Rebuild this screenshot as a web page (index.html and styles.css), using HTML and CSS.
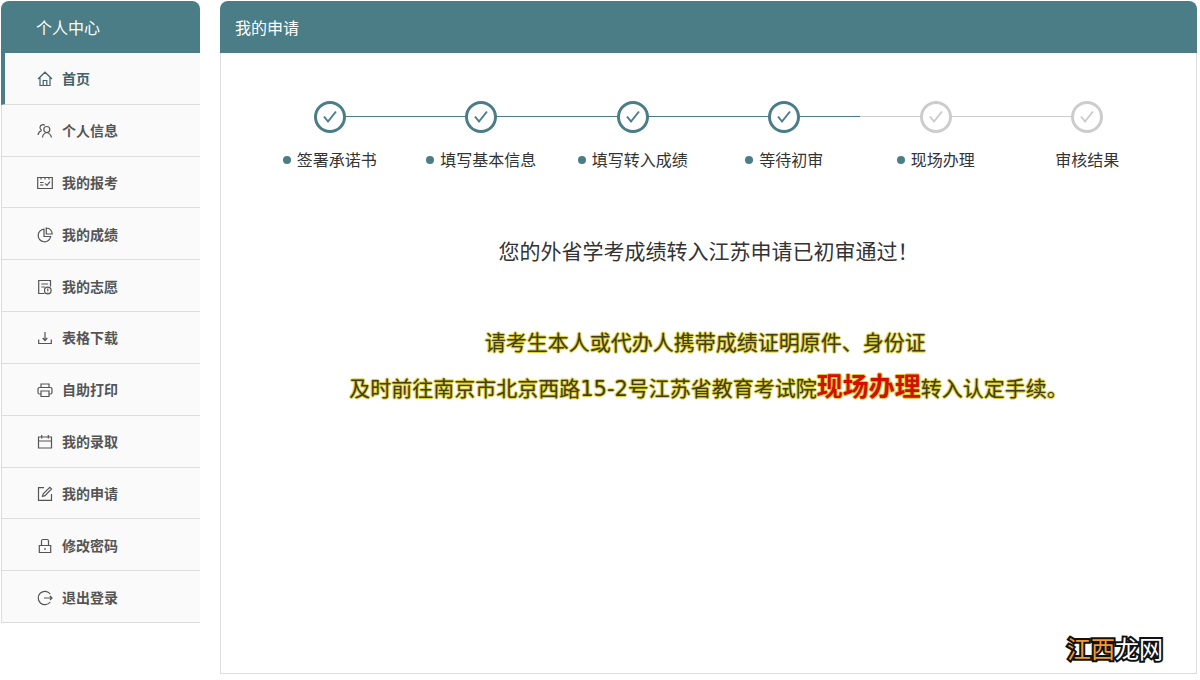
FILE: index.html
```html
<!DOCTYPE html>
<html lang="zh-CN">
<head>
<meta charset="utf-8">
<meta name="viewport" content="width=device-width, initial-scale=1">
<title>我的申请</title>
<link rel="stylesheet" href="styles.css">
</head>
<body>
<div class="layout">
  <aside class="sidebar">
    <h2 class="bar bar-side">个人中心</h2>
    <nav class="menu">
      <a class="menu-item active" href="#"><svg class="icon" viewBox="0 0 16 16"><path d="M1 8 8 1.200 15 8M3 6.500V14.500H13V6.500M6.200 14.500V9.500H9.800V14.500"/></svg>首页</a>
      <a class="menu-item" href="#"><svg class="icon" viewBox="0 0 16 16"><circle cx="9.800" cy="6.500" r="3"/><path d="M5.500 14.500C5.700 12 7 10.200 9.800 9.500 12.600 10.200 14 12 14.500 14.500M7.800 2.300C6.500 1.200 3.200 1.500 3 4.300 2.900 5.800 3.700 6.800 4.700 7.200M4.700 7.400C2.500 8.300 1.500 9.500 1 12"/></svg>个人信息</a>
      <a class="menu-item" href="#"><svg class="icon" viewBox="0 0 16 16"><path d="M.7 2.500H15.300V13.500H.7ZM4 2.500V4.500M8 2.500V4.500M12 2.500V4.500M3 7.500H6.500M3 10H6.500M8.300 8.500 10 10.300 13 6.700"/></svg>我的报考</a>
      <a class="menu-item" href="#"><svg class="icon" viewBox="0 0 16 16"><path d="M7 2.200A6.300 6.300 0 1 0 13.700 9.500H7ZM9.300 1V7H15.200C15 3.500 12.800 1.300 9.300 1Z"/></svg>我的成绩</a>
      <a class="menu-item" href="#"><svg class="icon" viewBox="0 0 16 16"><path d="M7.500 14.500H1.700V1.500H13.500V7.500M4.300 5H11M4.300 8H8"/><circle cx="10.800" cy="11.500" r="3.300"/><path d="M10.800 9.500V12M10.800 12.800V13.500"/></svg>我的志愿</a>
      <a class="menu-item" href="#"><svg class="icon" viewBox="0 0 16 16"><path d="M1.700 9.500V13.500H14.300V9.500M8 2V10.300M5.700 8 8 10.500 10.300 8"/></svg>表格下载</a>
      <a class="menu-item" href="#"><svg class="icon" viewBox="0 0 16 16"><path d="M4 5.500V2H12V5.500M4 12H2.500Q1 12 1 10.500V7Q1 5.500 2.500 5.500H13.500Q15 5.500 15 7V10.500Q15 12 13.500 12H12M4 9H12V14.500H4Z"/></svg>自助打印</a>
      <a class="menu-item" href="#"><svg class="icon" viewBox="0 0 16 16"><path d="M1.500 3H14.500V14H1.500ZM1.500 7H14.500M4.700 1V4.500M11.300 1V4.500"/></svg>我的录取</a>
      <a class="menu-item" href="#"><svg class="icon" viewBox="0 0 16 16"><path d="M7 1.700H1.500V14.300H14.500V8M5.500 10.300 6.200 7.700 12.800 1.300 14.500 3 8 9.600Z"/></svg>我的申请</a>
      <a class="menu-item" href="#"><svg class="icon" viewBox="0 0 16 16"><path d="M2.300 7.500H13.700V14.500H2.300ZM4.500 7.500V3Q4.500 1.500 6 1.500H10Q11.500 1.500 11.500 3V7.500M8 10V12"/></svg>修改密码</a>
      <a class="menu-item" href="#"><svg class="icon" viewBox="0 0 16 16"><path d="M13.300 4A6.700 6.700 0 1 0 13.300 12M7 8H15M13 6 15 8 13 10"/></svg>退出登录</a>
    </nav>
  </aside>
  <main class="panel">
    <h1 class="bar bar-main">我的申请</h1>
    <div class="content">
      <ol class="steps">
        <li class="step done"><span class="node"><svg class="tick" viewBox="0 0 16 16"><path d="M2 7.500 6 12.500 14 2.500"/></svg></span><span class="label dotted">签署承诺书</span></li>
        <li class="step done"><span class="node"><svg class="tick" viewBox="0 0 16 16"><path d="M2 7.500 6 12.500 14 2.500"/></svg></span><span class="label dotted">填写基本信息</span></li>
        <li class="step done"><span class="node"><svg class="tick" viewBox="0 0 16 16"><path d="M2 7.500 6 12.500 14 2.500"/></svg></span><span class="label dotted">填写转入成绩</span></li>
        <li class="step done"><span class="node"><svg class="tick" viewBox="0 0 16 16"><path d="M2 7.500 6 12.500 14 2.500"/></svg></span><span class="label dotted">等待初审</span></li>
        <li class="step"><span class="node"><svg class="tick" viewBox="0 0 16 16"><path d="M2 7.500 6 12.500 14 2.500"/></svg></span><span class="label dotted">现场办理</span></li>
        <li class="step"><span class="node"><svg class="tick" viewBox="0 0 16 16"><path d="M2 7.500 6 12.500 14 2.500"/></svg></span><span class="label">审核结果</span></li>
      </ol>
      <p class="result">您的外省学考成绩转入江苏申请已初审通过！</p>
      <div class="notice">
        <p>请考生本人或代办人携带成绩证明原件、身份证&nbsp;</p>
        <p>及时前往南京市北京西路15-2号江苏省教育考试院<strong>现场办理</strong>转入认定手续。</p>
      </div>
    </div>
    <div class="watermark"><span class="warm">江西</span>龙网</div>
  </main>
</div>
</body>
</html>
```
FILE: styles.css
```css
* { box-sizing: border-box; }
body {
  margin: 0;
  background: #fff;
  color: #333;
  font-family: "Open Sans", "Noto Sans CJK SC", sans-serif;
}
h1, h2, p, ol { margin: 0; padding: 0; }

.layout {
  display: flex;
  align-items: flex-start;
  gap: 20px;
  padding: 1px 3px 6px 1px;
}
.bar {
  height: 52px;
  border-radius: 8px 8px 0 0;
  background: #4a7d86;
  color: #fff;
  font-size: 16px;
  font-weight: 400;
  line-height: 54px;
}

.sidebar { flex: 0 0 199px; }
.bar-side { padding-left: 35px; }
.menu {
  display: flex;
  flex-direction: column;
  min-height: 570px;
  border-left: 1px solid #ddd;
  background: #fafafa;
}
.menu-item {
  flex: 1;
  display: flex;
  align-items: center;
  gap: 9px;
  padding-top: 2px;
  padding-left: 35px;
  border-bottom: 1px solid #ddd;
  color: #555;
  font-size: 14px;
  font-weight: 700;
  line-height: 20px;
  text-decoration: none;
}
.menu-item.active {
  margin-left: -1px;
  padding-left: 32px;
  border-left: 4px solid #4a7d86;
  color: #42616a;
}
.icon {
  width: 16px;
  height: 16px;
  fill: none;
  stroke: currentColor;
  stroke-width: 1.2;
}

.panel {
  position: relative;
  flex: 1;
  min-width: 0;
  min-height: calc(100vh - 7px);
  border-bottom: 1px solid #ddd;
}
.panel::before {
  content: "";
  position: absolute;
  inset: 52px 0 0;
  border: solid #ddd;
  border-width: 0 1px;
  pointer-events: none;
}
.bar-main { padding-left: 15px; }
.content { padding: 48px 34px; }

.steps {
  display: grid;
  grid-template-columns: repeat(6, 1fr);
  list-style: none;
}
.step {
  position: relative;
  display: flex;
  flex-direction: column;
  align-items: center;
  gap: 15px;
  color: #ccc;
}
.step.done { color: #4a7d86; }
.step::before {
  content: "";
  position: absolute;
  top: 15px;
  left: 0;
  right: 0;
  height: 1px;
  background: currentColor;
}
.step:first-child::before { left: 50%; }
.step:last-child::before { right: 50%; }
.node {
  position: relative;
  display: grid;
  place-items: center;
  width: 32px;
  height: 32px;
  border: 3px solid currentColor;
  border-radius: 50%;
  background: #fff;
}
.tick {
  width: 16px;
  height: 16px;
  fill: none;
  stroke: currentColor;
  stroke-width: 2;
}
.label {
  display: flex;
  align-items: center;
  gap: 6px;
  color: #333;
  font-size: 16px;
  line-height: 24px;
  white-space: nowrap;
}
.label.dotted::before {
  content: "";
  width: 8px;
  height: 8px;
  border-radius: 50%;
  background: #4a7d86;
}

.result {
  margin-top: 63px;
  font-size: 21px;
  line-height: 32px;
  text-align: center;
}
.notice {
  margin-top: 53px;
  color: #443e14;
  font-family: "DejaVu Sans", "Noto Sans CJK SC", sans-serif;
  font-size: 21px;
  line-height: 46px;
  text-align: center;
  text-shadow: 1px 0 1px #d8ca30, -1px 0 1px #d8ca30, 0 1px 1px #d8ca30, 0 -1px 1px #d8ca30;
}
.notice strong {
  color: #d40f00;
  font-size: 26px;
  line-height: 32px;
}

.watermark {
  position: absolute;
  right: 34px;
  bottom: 6px;
  color: #fff;
  font-size: 24px;
  line-height: 36px;
  -webkit-text-stroke: 4px #111;
  paint-order: stroke fill;
}
.warm { color: #f29a2e; }
```
